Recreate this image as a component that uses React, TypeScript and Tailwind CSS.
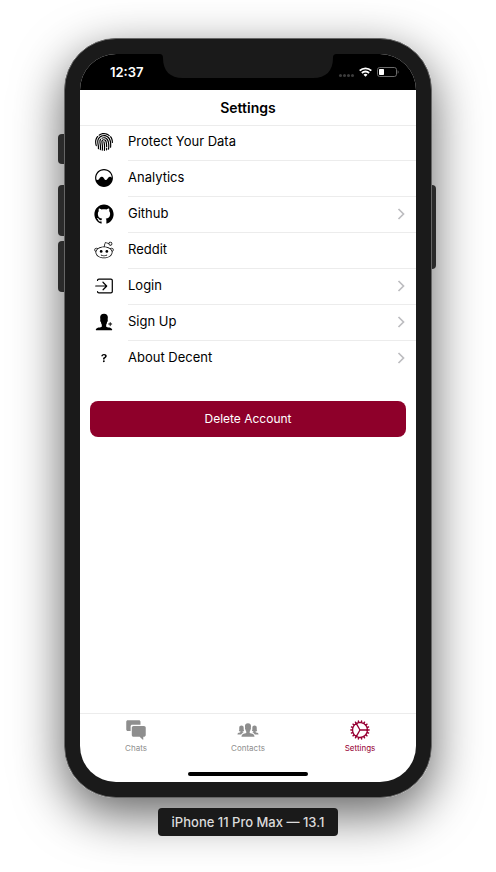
import type { ReactNode } from "react";
import {
  IoIosFingerPrint,
  IoIosAnalytics,
  IoLogoGithub,
  IoLogoReddit,
  IoIosLogIn,
  IoIosPersonAdd,
  IoIosHelp,
  IoIosChatboxes,
  IoIosPeople,
  IoIosCog,
} from "react-icons/io";

function Chevron() {
  return (
    <svg viewBox="0 0 8 12" className="h-3 w-2 shrink-0" fill="none" stroke="#bdbdc0" strokeWidth="1.7">
      <path d="M1.5 1 6.5 6 1.5 11" />
    </svg>
  );
}

function WifiIcon() {
  return (
    <svg viewBox="0 0 13 10" className="h-[10px] w-[13px]" fill="none" stroke="#fff" strokeWidth="1.8">
      <path d="M.7 3.700a8.200 8.200 0 0 1 11.600 0M2.900 6a5.100 5.100 0 0 1 7.200 0" />
      <path d="M6.500 9.800 4.500 7.800a2.900 2.900 0 0 1 4 0Z" fill="#fff" stroke="none" />
    </svg>
  );
}

function BatteryIcon() {
  return (
    <svg viewBox="0 0 22 10" className="h-[10px] w-[22px]" fill="none">
      <rect x=".5" y=".5" width="19" height="9" rx="2.2" stroke="#6b6b6b" />
      <rect x="2" y="2" width="5" height="6" rx=".8" fill="#fff" />
      <path d="M20.700 3.300c1.200.5 1.200 2.900 0 3.400Z" fill="#6b6b6b" />
    </svg>
  );
}

function Notch() {
  return (
    <svg viewBox="0 0 178 24" className="absolute left-1/2 top-0 h-6 w-[178px] -translate-x-1/2" fill="#1a1a1a">
      <path d="M0 0h178c-3 0-4 1-4 4 0 13-7 20-20 20H24C11 24 4 17 4 4 4 1 3 0 0 0Z" />
    </svg>
  );
}

type Item = { label: string; icon: ReactNode; chevron?: boolean };

const items: Item[] = [
  { label: "Protect Your Data", icon: <IoIosFingerPrint className="size-[22px]" /> },
  { label: "Analytics", icon: <IoIosAnalytics className="size-[22px]" /> },
  { label: "Github", icon: <IoLogoGithub className="size-[22px]" />, chevron: true },
  { label: "Reddit", icon: <IoLogoReddit className="size-[22px]" /> },
  { label: "Login", icon: <IoIosLogIn className="size-[22px]" />, chevron: true },
  { label: "Sign Up", icon: <IoIosPersonAdd className="size-[22px]" />, chevron: true },
  { label: "About Decent", icon: <IoIosHelp className="size-[22px]" />, chevron: true },
];

const tabs = [
  { label: "Chats", icon: <IoIosChatboxes className="size-6" />, active: false },
  { label: "Contacts", icon: <IoIosPeople className="size-6" />, active: false },
  { label: "Settings", icon: <IoIosCog className="size-6" />, active: true },
];

export default function App() {
  return (
    <div className="flex min-h-screen flex-col items-center overflow-hidden bg-white px-16 pt-[38px] pb-9 font-['Inter','Liberation_Sans',sans-serif]">
      <div className="relative flex w-full max-w-[368px] grow flex-col rounded-[52px] shadow-[0_16px_50px_rgba(0,0,0,0.62)]">
        <span className="absolute -left-1.5 top-24 h-[30px] w-3 rounded-sm bg-[#2b2b2b]" />
        <span className="absolute -left-1.5 top-[147px] h-[51px] w-3 rounded-sm bg-[#2b2b2b]" />
        <span className="absolute -left-1.5 top-[203px] h-[51px] w-3 rounded-sm bg-[#2b2b2b]" />
        <span className="absolute -right-1 top-[147px] h-[84px] w-3 rounded-sm bg-[#2b2b2b]" />

        <div className="relative flex grow flex-col rounded-[52px] border border-[#666666] bg-[#1a1a1a] p-[15px]">
          <div className="flex grow flex-col overflow-hidden rounded-[36px] bg-white">
            <div className="relative flex h-9 items-center justify-between bg-black pr-[17px] pl-[30px]">
              <Notch />
              <span className="pt-0.5 text-[13px] font-semibold text-white">12:37</span>
              <div className="flex items-center gap-[5px]">
                <div className="flex gap-px pt-1.5">
                  <span className="size-[3px] rounded-full bg-[#3c3c3c]" />
                  <span className="size-[3px] rounded-full bg-[#3c3c3c]" />
                  <span className="size-[3px] rounded-full bg-[#3c3c3c]" />
                  <span className="size-[3px] rounded-full bg-[#3c3c3c]" />
                </div>
                <WifiIcon />
                <BatteryIcon />
              </div>
            </div>

            <header className="flex h-9 items-center justify-center border-b border-[#ececec]">
              <h1 className="text-sm font-semibold text-black">Settings</h1>
            </header>

            <ul className="-mt-px">
              {items.map((item) => (
                <li key={item.label} className="group">
                  <button type="button" className="flex h-9 w-full items-center gap-3 pl-3 text-left text-black">
                    <span className="flex h-full w-6 shrink-0 items-center justify-center pb-0.5">{item.icon}</span>
                    <span className="flex h-full grow items-center justify-between border-b border-[#ececec] pr-[11px] pb-0.5 text-[13px] group-last:border-transparent">
                      {item.label}
                      {item.chevron && <Chevron />}
                    </span>
                  </button>
                </li>
              ))}
            </ul>

            <button type="button" className="mx-2.5 mt-6 h-9 rounded-lg bg-[#8e002a] text-xs text-white">
              Delete Account
            </button>

            <nav className="mt-auto grid grid-cols-3 border-t border-[#ececec] pt-1">
              {tabs.map((tab) => (
                <button
                  key={tab.label}
                  type="button"
                  className={`flex flex-col items-center text-[8px] leading-3 ${tab.active ? "text-[#970033]" : "text-[#8e8e8e]"}`}
                >
                  {tab.icon}
                  {tab.label}
                </button>
              ))}
            </nav>
            <div className="flex h-7 items-end justify-center pb-1.5">
              <span className="h-1 w-[120px] rounded-full bg-black" />
            </div>
          </div>
        </div>
      </div>

      <p className="relative mt-2.5 flex h-7 items-center rounded bg-[#1a1a1a] px-3.5 pt-0.5 text-[13px] font-medium text-[#dcdcdc]">
        iPhone 11 Pro Max — 13.1
      </p>
    </div>
  );
}
